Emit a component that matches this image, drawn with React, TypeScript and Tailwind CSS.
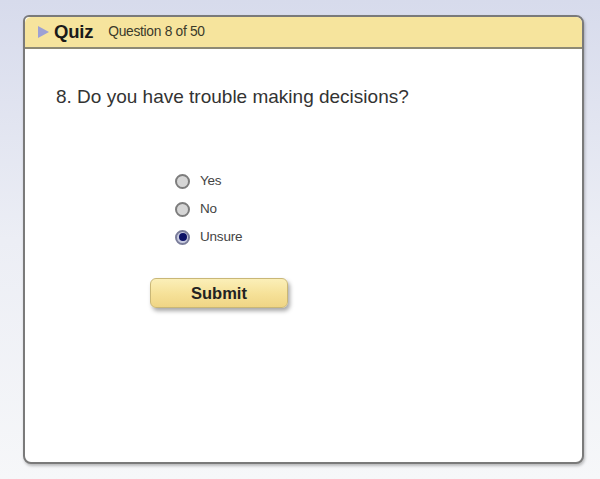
import { useState } from "react";

const options = ["Yes", "No", "Unsure"];

export default function App() {
  const [answer, setAnswer] = useState("Unsure");

  return (
    <div
      className="h-[479px] w-[600px] overflow-hidden bg-gradient-to-b from-[#d7dbec] via-[#eceef5] to-[#f6f7f9] pl-[23px] pt-[15px]"
      style={{ fontFamily: '"Liberation Sans", Arial, sans-serif' }}
    >
      <div className="flex h-[449px] w-[561px] flex-col rounded-[8px] rounded-tl-[6px] border-2 border-[#7a7a7a] bg-white shadow-[1px_2px_3px_rgba(0,0,0,0.25)]">
        <QuizHeader />

        <div className="flex flex-col pl-[31px] pt-[37px]">
          <h1 className="text-[19px] leading-[22px] text-[#333333]">
            8. Do you have trouble making decisions?
          </h1>

          <div className="ml-[119px] mt-[65px] flex flex-col gap-[12px]">
            {options.map((opt) => (
              <RadioRow
                key={opt}
                label={opt}
                checked={answer === opt}
                onSelect={() => setAnswer(opt)}
              />
            ))}
          </div>

          <button className="ml-[94px] mt-[33px] flex h-[30px] w-[138px] items-center justify-center rounded-[6px] border border-[#c9b777] bg-gradient-to-b from-[#fbefb8] via-[#f6e29a] to-[#efd585] text-[16.5px] font-bold text-[#222222] shadow-[2px_3px_4px_rgba(0,0,0,0.35)]">
            Submit
          </button>
        </div>
      </div>
    </div>
  );
}

const QuizHeader = () => (
  <div className="flex h-[32px] items-center rounded-t-[6px] border-b-2 border-[#8e8a74] bg-[#f6e49d] pl-[13px]">
    <svg width="11" height="12" viewBox="0 0 11 12" className="mr-[5px]">
      <polygon points="0,0 11,6 0,12" fill="#9da1d4" />
    </svg>
    <span className="text-[18.5px] font-bold tracking-[-0.2px] text-[#1a1a1a]">Quiz</span>
    <span className="ml-[15px] text-[13.8px] tracking-[-0.3px] text-[#3a3a2a]">Question 8 of 50</span>
  </div>
);

const RadioRow = ({
  label,
  checked,
  onSelect,
}: {
  label: string;
  checked: boolean;
  onSelect: () => void;
}) => (
  <label className="flex h-[16px] cursor-pointer items-center gap-[10px]" onClick={onSelect}>
    <span
      className={
        checked
          ? "flex h-[15px] w-[15px] items-center justify-center rounded-full border-2 border-[#7a7d9a] bg-[#c8cbe0]"
          : "flex h-[15px] w-[15px] items-center justify-center rounded-full border-2 border-[#7d7d7d] bg-[#d6d6d6]"
      }
    >
      {checked && <span className="h-[8px] w-[8px] rounded-full bg-[#0d1266]" />}
    </span>
    <span className="text-[13.5px] tracking-[-0.2px] text-[#444444]">{label}</span>
  </label>
);
